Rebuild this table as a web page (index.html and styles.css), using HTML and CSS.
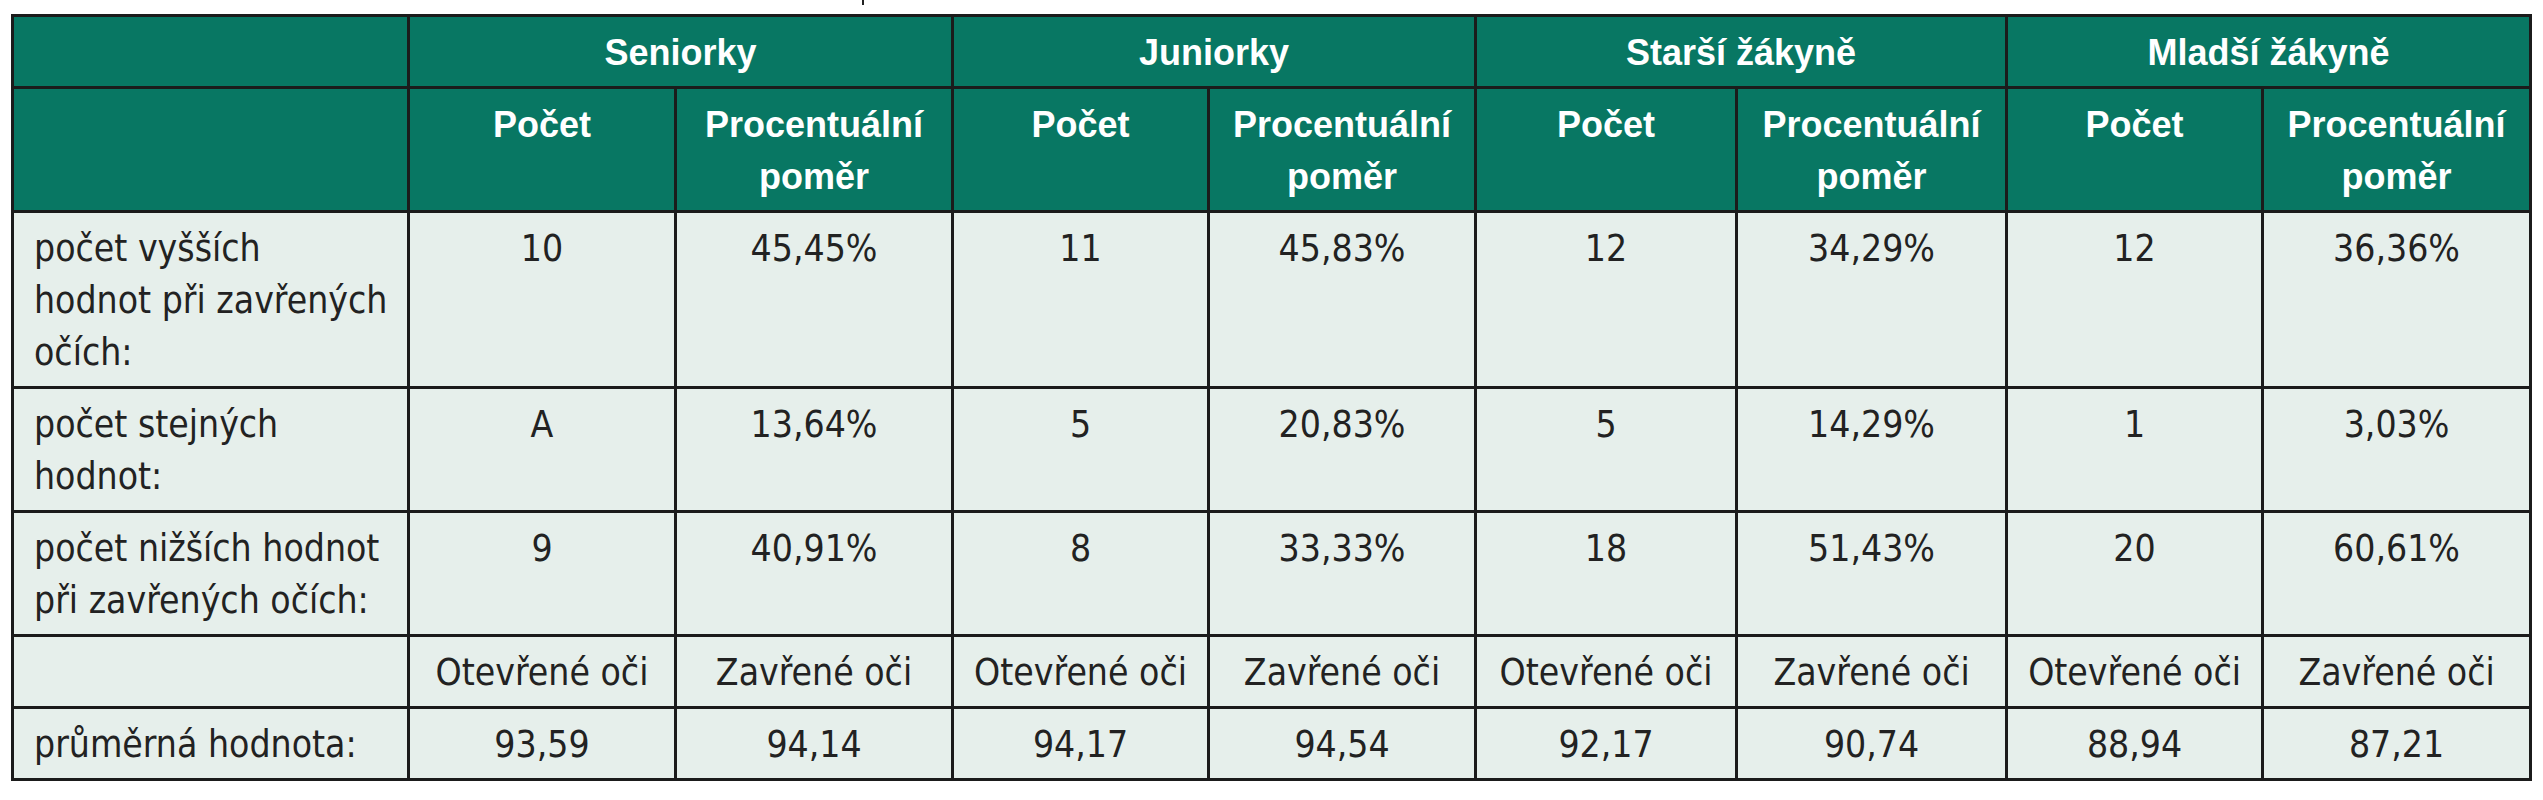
FILE: index.html
```html
<!DOCTYPE html>
<html lang="cs">
<head>
<meta charset="utf-8">
<title>Tabulka</title>
<link rel="stylesheet" href="styles.css">
</head>
<body>
<div class="cut"><span class="cut-mark"></span></div>
<table class="data">
  <colgroup>
    <col class="c-label">
    <col class="c-n1"><col class="c-p1">
    <col class="c-n2"><col class="c-p2">
    <col class="c-n3"><col class="c-p3">
    <col class="c-n4"><col class="c-p4">
  </colgroup>
  <thead>
    <tr>
      <th></th>
      <th colspan="2">Seniorky</th>
      <th colspan="2">Juniorky</th>
      <th colspan="2">Starší žákyně</th>
      <th colspan="2">Mladší žákyně</th>
    </tr>
    <tr>
      <th></th>
      <th>Počet</th><th>Procentuální poměr</th>
      <th>Počet</th><th>Procentuální poměr</th>
      <th>Počet</th><th>Procentuální poměr</th>
      <th>Počet</th><th>Procentuální poměr</th>
    </tr>
  </thead>
  <tbody>
    <tr>
      <td class="label">počet vyšších<br>hodnot při zavřených<br>očích:</td>
      <td>10</td><td>45,45%</td>
      <td>11</td><td>45,83%</td>
      <td>12</td><td>34,29%</td>
      <td>12</td><td>36,36%</td>
    </tr>
    <tr>
      <td class="label">počet stejných<br>hodnot:</td>
      <td>A</td><td>13,64%</td>
      <td>5</td><td>20,83%</td>
      <td>5</td><td>14,29%</td>
      <td>1</td><td>3,03%</td>
    </tr>
    <tr>
      <td class="label">počet nižších hodnot<br>při zavřených očích:</td>
      <td>9</td><td>40,91%</td>
      <td>8</td><td>33,33%</td>
      <td>18</td><td>51,43%</td>
      <td>20</td><td>60,61%</td>
    </tr>
    <tr>
      <td class="label"></td>
      <td>Otevřené oči</td><td>Zavřené oči</td>
      <td>Otevřené oči</td><td>Zavřené oči</td>
      <td>Otevřené oči</td><td>Zavřené oči</td>
      <td>Otevřené oči</td><td>Zavřené oči</td>
    </tr>
    <tr>
      <td class="label">průměrná hodnota:</td>
      <td>93,59</td><td>94,14</td>
      <td>94,17</td><td>94,54</td>
      <td>92,17</td><td>90,74</td>
      <td>88,94</td><td>87,21</td>
    </tr>
  </tbody>
</table>
</body>
</html>
```

FILE: styles.css
```css
html, body {
  margin: 0;
  padding: 0;
  background: #ffffff;
}

.cut {
  height: 14px;
  position: relative;
}

.cut-mark {
  position: absolute;
  left: 862px;
  top: 0;
  width: 2px;
  height: 5px;
  background: #222222;
}

.data {
  margin-left: 11px;
  border-collapse: collapse;
  table-layout: fixed;
  width: 2518px;
  border: 3px solid #1b1b1b;
  font-family: "DejaVu Sans Condensed", "DejaVu Sans", sans-serif;
  font-stretch: condensed;
  font-size: 37px;
  line-height: 52px;
  color: #222222;
}

.c-label { width: 396px; }
.c-n1 { width: 267px; }
.c-p1 { width: 277px; }
.c-n2 { width: 256px; }
.c-p2 { width: 267px; }
.c-n3 { width: 261px; }
.c-p3 { width: 270px; }
.c-n4 { width: 256px; }
.c-p4 { width: 268px; }

.data th,
.data td {
  border: 3px solid #1b1b1b;
  padding: 10px 8px 7px;
  vertical-align: top;
  text-align: center;
}

.data th {
  background: #087763;
  color: #ffffff;
  font-family: "Liberation Sans", Arial, sans-serif;
  font-weight: bold;
  font-stretch: normal;
  font-size: 36px;
}

.data td {
  background: #e6efeb;
}

.data td.label {
  text-align: left;
  padding-left: 20px;
  padding-right: 6px;
  white-space: nowrap;
}
```
